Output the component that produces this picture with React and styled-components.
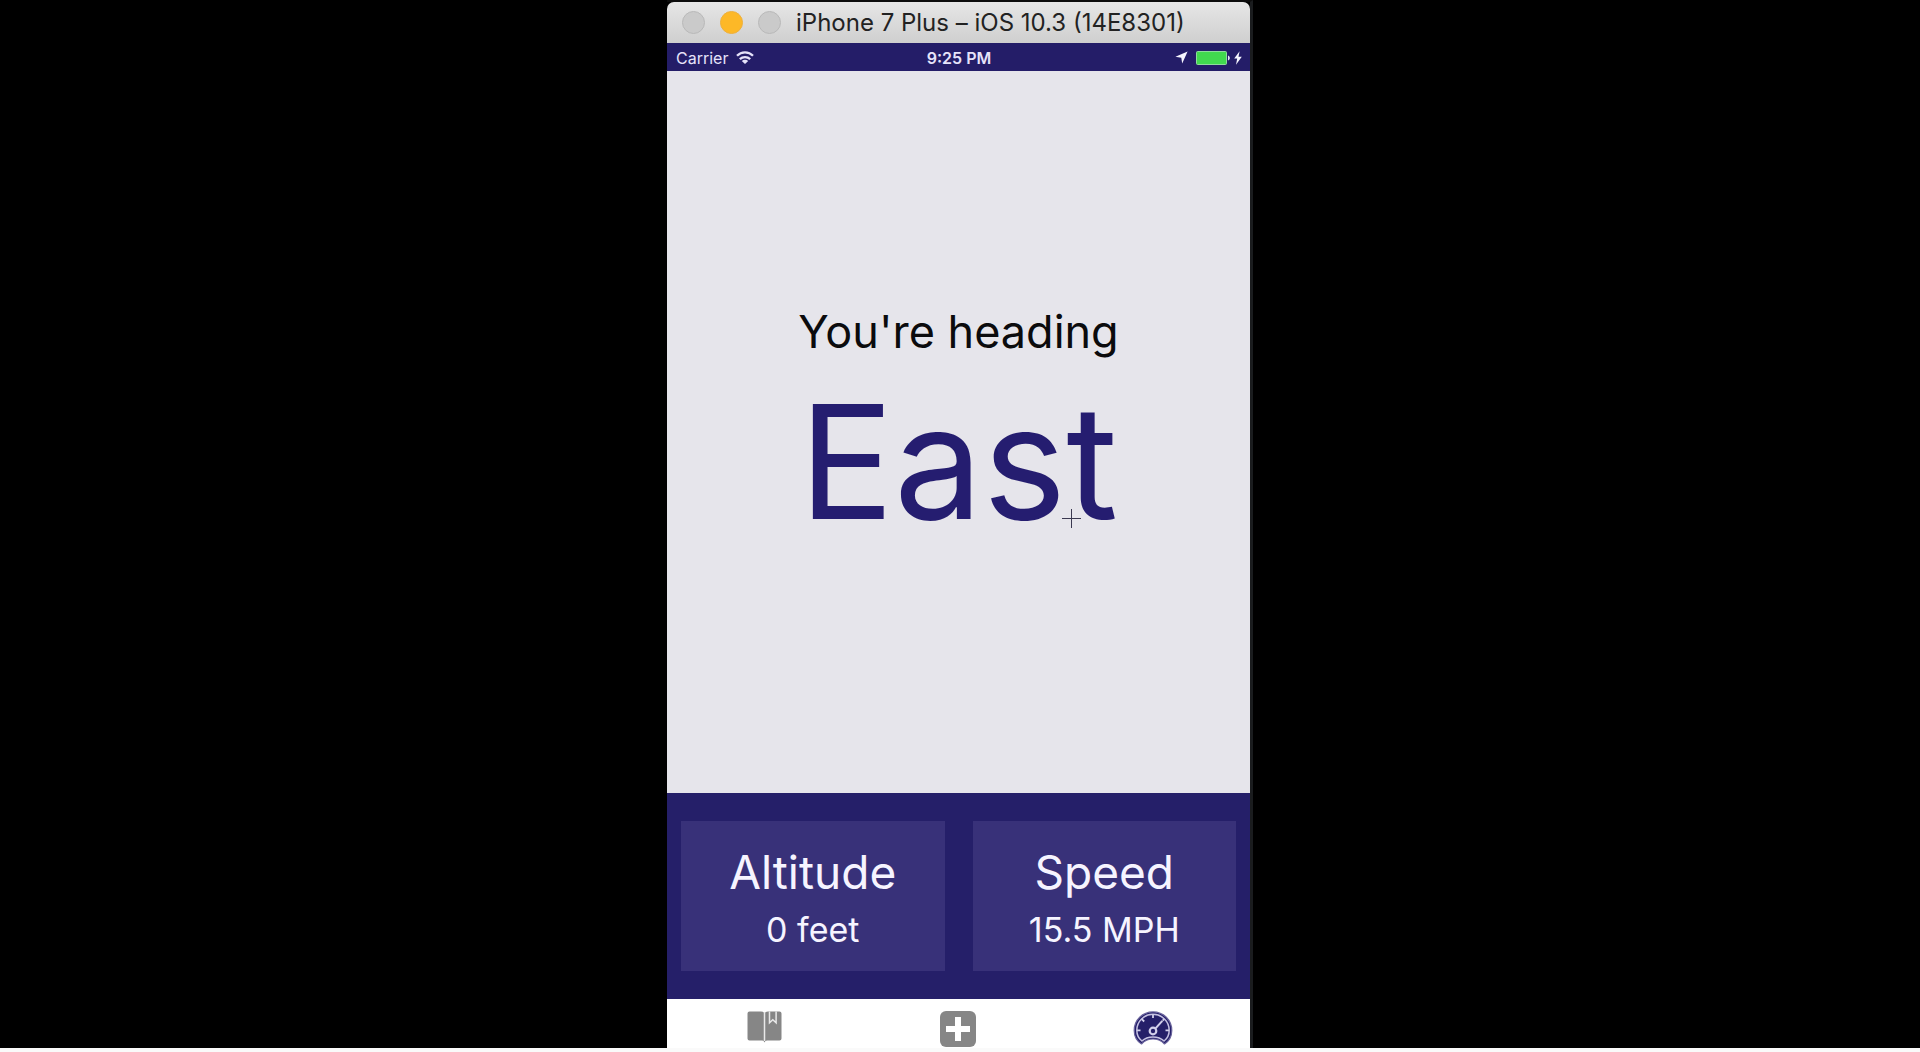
import React from "react";
import styled, { createGlobalStyle } from "styled-components";

const GlobalStyle = createGlobalStyle`
  *, *::before, *::after { box-sizing: border-box; }
  body {
    margin: 0;
    background: #000;
    font-family: Inter, "Liberation Sans", sans-serif;
  }
  button { font: inherit; }
`;

const Screen = styled.div`
  min-height: 100vh;
  display: flex;
  flex-direction: column;
  align-items: center;
  border-bottom: 4px solid #fafafa;
`;

const Simulator = styled.div`
  flex: 1;
  width: 100%;
  max-width: 586px;
  display: flex;
  flex-direction: column;
  border-top: 2px solid #0c0c0c;
  border-right: 3px solid #1a1c1e;
`;

const TitleBar = styled.header`
  display: flex;
  align-items: center;
  height: 41px;
  padding: 0 15px;
  background: linear-gradient(#e6e6e6, #cfcfcf);
  border-radius: 7px 7px 0 0;
`;

const Lights = styled.div`
  display: flex;
  gap: 15px;
`;

const Light = styled.button`
  width: 23px;
  height: 23px;
  padding: 0;
  border: 1px solid ${(p) => (p.$active ? "#eeb03c" : "#b9b9b9")};
  border-radius: 50%;
  background: ${(p) => (p.$active ? "#fdb827" : "#cacaca")};
`;

const WindowTitle = styled.h1`
  margin: 0 0 0 15px;
  font-size: 24px;
  font-weight: 400;
  line-height: 28px;
  white-space: nowrap;
  color: #222;
`;

const StatusBar = styled.div`
  display: grid;
  grid-template-columns: 1fr auto 1fr;
  align-items: center;
  height: 28px;
  padding: 1px 8px 0 9px;
  background: #241d68;
  color: #e6e3fa;
  font-size: 16px;
  line-height: 20px;
`;

const StatusGroup = styled.div`
  display: flex;
  align-items: center;
  justify-content: ${(p) => (p.$end ? "flex-end" : "flex-start")};
  gap: 8px;
`;

const Clock = styled.time`
  font-weight: 600;
`;

const Power = styled.div`
  display: flex;
  align-items: center;
  gap: 4px;
`;

const Heading = styled.main`
  flex: 1;
  display: flex;
  flex-direction: column;
  align-items: center;
  justify-content: center;
  background: #e6e5eb;
`;

const Caption = styled.p`
  margin: 0;
  font-size: 45px;
  line-height: 60px;
  color: #0b0b0d;
`;

const Direction = styled.p`
  position: relative;
  margin: 0;
  font-size: 158px;
  line-height: 200px;
  color: #251d70;
`;

const Pointer = styled.svg`
  position: absolute;
  right: 37px;
  bottom: 34px;
`;

const Stats = styled.section`
  display: grid;
  grid-template-columns: 1fr 1fr;
  gap: 28px;
  padding: 28px 14px;
  background: #251f69;
`;

const Card = styled.div`
  display: flex;
  flex-direction: column;
  align-items: center;
  justify-content: center;
  height: 150px;
  background: #383179;
  color: #f6f4ff;
`;

const CardTitle = styled.h2`
  margin: 0;
  font-size: 46px;
  font-weight: 400;
  line-height: 68px;
`;

const CardValue = styled.p`
  margin: 0;
  font-size: 34px;
  line-height: 48px;
`;

const TabBar = styled.nav`
  display: grid;
  grid-template-columns: repeat(3, 1fr);
  height: 49px;
  background: #fff;
`;

const Tab = styled.button`
  display: flex;
  justify-content: center;
  align-items: flex-start;
  padding: 12px 0 0;
  border: 0;
  background: none;
  color: ${(p) => (p.$active ? "#251f69" : "#868686")};
`;

const WifiIcon = () => (
  <svg width="18" height="13" viewBox="0 0 18 13" fill="none" stroke="currentColor" strokeWidth="2.300" aria-hidden="true">
    <path d="M1 4.800C5.400.2 12.600.2 17 4.800" />
    <path d="M3.800 8.200c3-2.900 7.400-2.900 10.400 0" />
    <path d="M5.800 9.900C7.600 8.300 10.400 8.300 12.200 9.900L9 13z" fill="currentColor" stroke="none" />
  </svg>
);

const LocationIcon = () => (
  <svg width="13" height="13" viewBox="0 0 13 13" fill="#f6f5ff" aria-hidden="true">
    <path d="M12.600.400 7.200 12.600 6.300 6.700.400 5.800z" />
  </svg>
);

const BatteryIcon = () => (
  <svg width="34" height="14" viewBox="0 0 34 14" aria-hidden="true">
    <rect x=".5" y=".5" width="30" height="13" rx="1" fill="#41d94f" stroke="#8fdc9d" />
    <path d="M32 4.500c2.400.8 2.400 4.200 0 5z" fill="#e6e3fa" />
  </svg>
);

const BoltIcon = () => (
  <svg width="8" height="14" viewBox="0 0 8 14" fill="#f6f5ff" aria-hidden="true">
    <path d="M5.600.3.2 7.600h3L2 13.700l5.800-7.900H4.500z" />
  </svg>
);

const BookIcon = () => (
  <svg width="35" height="32" viewBox="0 0 35 32" aria-hidden="true">
    <path d="M2.500.5H14q3 0 3.500 2Q18 .5 21 .5h11.500q2 0 2 2v25q0 2-2 2H20q-2 0-2.500 2-.5-2-2.500-2H2.500q-2 0-2-2v-25q0-2 2-2z" fill="currentColor" />
    <path d="M17.500 1v29" stroke="#e9e9e9" strokeWidth="1.500" />
    <path d="M22.500.5v11.300l3.300-3 3.300 3V.5" fill="none" stroke="#e9e9e9" strokeWidth="1.500" />
  </svg>
);

const PlusIcon = () => (
  <svg width="36" height="36" viewBox="0 0 36 36" aria-hidden="true">
    <rect width="36" height="36" rx="6" fill="currentColor" />
    <path d="M18 6v24M6 18h24" stroke="#fff" strokeWidth="6" />
  </svg>
);

const GaugeIcon = () => (
  <svg width="40" height="34" viewBox="0 0 40 34" fill="none" aria-hidden="true">
    <path
      d="M8.500 33C3.800 30 1.200 25 1.200 19.500 1.200 9 9.600.9 20 .9S38.800 9 38.800 19.500c0 5.500-2.600 10.500-7.300 13.500C28.500 29.600 25 28 20 28S11.500 29.600 8.500 33z"
      fill="currentColor"
      stroke="#69639c"
      strokeWidth="1.200"
      strokeLinejoin="round"
    />
    <path
      d="M8.900 30C5.600 27.500 3.800 23.500 3.800 19.300 3.800 10.500 11 3.300 20 3.300s16.200 7.200 16.200 16c0 4.200-1.800 8.200-5.100 10.700C28 27 24.500 25.900 20 25.900S12 27 8.900 30z"
      stroke="#c5c1e2"
      strokeWidth="1.500"
    />
    <path d="M20 3.500v3.500M8.800 8.100l2.400 2.400M31.200 8.100l-1.600 1.600M4 19.300h3.500M36 19.300h-3.500" stroke="#d2cfea" strokeWidth="1.800" />
    <path d="M22.300 17.700 29.300 9.800" stroke="#d2cfea" strokeWidth="2" />
    <circle cx="20" cy="20" r="3.300" stroke="#d2cfea" strokeWidth="2.200" />
  </svg>
);

const tabs = [
  { label: "Logbook", Icon: BookIcon },
  { label: "Add", Icon: PlusIcon },
  { label: "Dashboard", Icon: GaugeIcon, active: true },
];

const stats = [
  { label: "Altitude", value: "0 feet" },
  { label: "Speed", value: "15.5 MPH" },
];

export default function App() {
  return (
    <>
      <GlobalStyle />
      <Screen>
        <Simulator>
          <TitleBar>
            <Lights>
              <Light type="button" aria-label="Close" />
              <Light type="button" aria-label="Minimize" $active />
              <Light type="button" aria-label="Zoom" />
            </Lights>
            <WindowTitle>iPhone 7 Plus – iOS 10.3 (14E8301)</WindowTitle>
          </TitleBar>
          <StatusBar>
            <StatusGroup>
              <span>Carrier</span>
              <WifiIcon />
            </StatusGroup>
            <Clock>9:25 PM</Clock>
            <StatusGroup $end>
              <LocationIcon />
              <Power>
                <BatteryIcon />
                <BoltIcon />
              </Power>
            </StatusGroup>
          </StatusBar>
          <Heading>
            <Caption>You're heading</Caption>
            <Direction>
              East
              <Pointer width="19" height="19" viewBox="0 0 19 19" stroke="#3b3950" aria-hidden="true">
                <path d="M9.500 0v19M0 9.500h19" />
              </Pointer>
            </Direction>
          </Heading>
          <Stats>
            {stats.map(({ label, value }) => (
              <Card key={label}>
                <CardTitle>{label}</CardTitle>
                <CardValue>{value}</CardValue>
              </Card>
            ))}
          </Stats>
          <TabBar>
            {tabs.map(({ label, Icon, active }) => (
              <Tab key={label} type="button" aria-label={label} $active={active}>
                <Icon />
              </Tab>
            ))}
          </TabBar>
        </Simulator>
      </Screen>
    </>
  );
}
